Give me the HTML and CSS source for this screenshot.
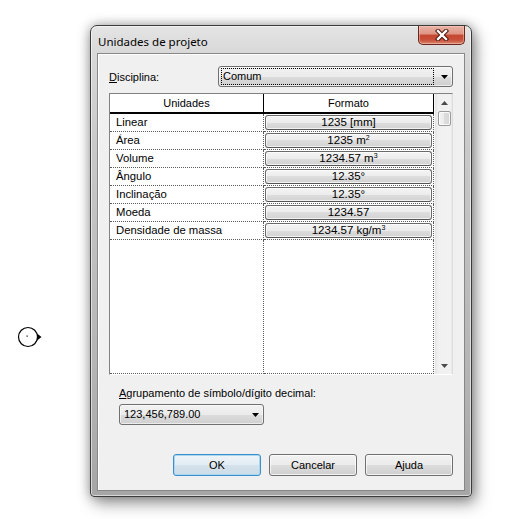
FILE: index.html
```html
<!DOCTYPE html>
<html lang="pt">
<head>
<meta charset="utf-8">
<title>Unidades de projeto</title>
<link rel="stylesheet" href="styles.css">
</head>
<body>
<svg class="cursor" width="28" height="22" viewBox="0 0 28 22">
  <circle cx="12" cy="11" r="9.5" fill="#fff" stroke="#000" stroke-width="1.2"/>
  <rect x="10.5" y="9.5" width="1.2" height="1.2" fill="#000"/>
  <path d="M21 7.5 L25.5 11 L21 14.5 Z" fill="#000"/>
</svg>
<div class="window">
  <div class="titlebar">
    <span class="title">Unidades de projeto</span>
    <button class="close" aria-label="Fechar">
      <svg width="14" height="12" viewBox="0 0 14 12">
        <path d="M3 2 L11 10 M11 2 L3 10" stroke="#4a130b" stroke-width="4.4" stroke-linecap="square"/>
        <path d="M3 2 L11 10 M11 2 L3 10" stroke="#fff" stroke-width="2.4" stroke-linecap="square"/>
      </svg>
    </button>
  </div>
  <div class="client">
    <div class="discipline">
      <span class="label"><u>D</u>isciplina:</span>
      <div class="combo combo-main">
        <span class="focus-box">Comum</span>
        <span class="combo-arrow"><svg width="7" height="4" viewBox="0 0 7 4"><path d="M0 0H7L3.5 4Z" fill="#000"/></svg></span>
      </div>
    </div>
    <div class="table">
      <div class="cells">
        <div class="hcell">Unidades</div>
        <div class="hcell">Formato</div>

        <div class="cell name">Linear</div>
        <div class="cell fmt"><span class="fbtn">1235 [mm]</span></div>
        <div class="cell name">Área</div>
        <div class="cell fmt"><span class="fbtn">1235 m<sup>2</sup></span></div>
        <div class="cell name">Volume</div>
        <div class="cell fmt"><span class="fbtn">1234.57 m<sup>3</sup></span></div>
        <div class="cell name">Ângulo</div>
        <div class="cell fmt"><span class="fbtn">12.35°</span></div>
        <div class="cell name">Inclinação</div>
        <div class="cell fmt"><span class="fbtn">12.35°</span></div>
        <div class="cell name">Moeda</div>
        <div class="cell fmt"><span class="fbtn">1234.57</span></div>
        <div class="cell name">Densidade de massa</div>
        <div class="cell fmt"><span class="fbtn">1234.57 kg/m<sup>3</sup></span></div>

        <div class="cell filler"></div>
        <div class="cell filler"></div>
      </div>
      <div class="scrollbar">
        <div class="sb-btn"><svg width="7" height="4" viewBox="0 0 7 4"><path d="M0 4H7L3.5 0Z" fill="#4a4a4a"/></svg></div>
        <div class="sb-thumb"></div>
        <div class="sb-track"></div>
        <div class="sb-btn"><svg width="7" height="4" viewBox="0 0 7 4"><path d="M0 0H7L3.5 4Z" fill="#4a4a4a"/></svg></div>
      </div>
    </div>
    <div class="group-label"><u>A</u>grupamento de símbolo/dígito decimal:</div>
    <div class="combo combo-small">
      <span class="combo-text">123,456,789.00</span>
      <svg width="7" height="4" viewBox="0 0 7 4"><path d="M0 0H7L3.5 4Z" fill="#000"/></svg>
    </div>
    <div class="buttons">
      <button class="btn btn-default">OK</button>
      <button class="btn">Cancelar</button>
      <button class="btn">A<u>j</u>uda</button>
    </div>
  </div>
</div>
</body>
</html>
```

FILE: styles.css
```css
* { box-sizing: border-box; }

html, body {
  margin: 0;
  padding: 0;
  background: #fff;
}

body {
  width: 527px;
  height: 519px;
  overflow: hidden;
  position: relative;
  padding: 25px 0 0 90px;
  font-family: "Liberation Sans", Arial, sans-serif;
  font-size: 11px;
  color: #000;
}

.cursor {
  position: absolute;
  left: 16px;
  top: 326px;
}

.window {
  width: 382px;
  height: 472px;
  border: 1px solid #3b3b3b;
  border-radius: 7px 7px 4px 4px;
  background: linear-gradient(to bottom, #e4e4e4 0px, #d9d9d9 26px, #c9c9c9 120px, #b3b3b3 360px, #a6a6a6 100%);
  padding: 0 6px 5px;
  display: flex;
  flex-direction: column;
  box-shadow: 0 0 12px rgba(0, 0, 0, 0.35), 4px 7px 16px rgba(0, 0, 0, 0.35), inset 0 0 0 1px rgba(255, 255, 255, 0.55);
}

.titlebar {
  height: 27px;
  flex: none;
  display: flex;
  justify-content: space-between;
  align-items: flex-start;
}

.title {
  font-family: "Noto Sans", "Liberation Sans", sans-serif;
  font-size: 11.5px;
  line-height: 16px;
  margin: 8px 0 0 1px;
  color: #000;
}

.close {
  width: 47px;
  height: 19px;
  padding: 0;
  border: 1px solid #6b261b;
  border-top: none;
  border-radius: 0 0 5px 5px;
  background: linear-gradient(to bottom, #e9b3a5 0%, #dd9484 45%, #c5472f 50%, #c8503a 78%, #dc8a74 100%);
  box-shadow: inset 0 0 0 1px rgba(255, 210, 200, 0.45);
  display: flex;
  align-items: center;
  justify-content: center;
}

.close svg { display: block; }

.client {
  flex: 1;
  border: 1px solid #878787;
  background: #f0f0f0;
  box-shadow: inset 1px 1px 0 #fff;
  padding: 12px 11px 0;
  display: flex;
  flex-direction: column;
}

.discipline {
  height: 21px;
  display: flex;
  align-items: center;
}

.label {
  flex: 1;
  line-height: 14px;
}

.combo {
  height: 21px;
  border: 1px solid #707070;
  border-radius: 3px;
  background: linear-gradient(to bottom, #f2f2f2 0%, #ebebeb 50%, #dddddd 50%, #cfcfcf 100%);
  box-shadow: inset 0 0 0 1px rgba(255, 255, 255, 0.6);
  display: flex;
  align-items: center;
}

.combo-main {
  width: 235px;
  padding: 1px 0 1px 2px;
}

.focus-box {
  flex: 1;
  height: 17px;
  border: 1px dotted #000;
  padding-left: 1px;
  line-height: 15px;
}

.combo-arrow {
  width: 18px;
  display: flex;
  justify-content: center;
  padding-left: 2px;
}

.combo-arrow svg, .combo-small svg { display: block; }

.table {
  margin-top: 6px;
  height: 282px;
  border: 1px solid;
  border-color: #828282 #dcdcdc #ffffff #828282;
  background: #fff;
  display: flex;
}

.cells {
  width: 324px;
  display: grid;
  grid-template-columns: 154px 170px;
  grid-template-rows: 20px repeat(7, 18px) 1fr;
}

.hcell {
  background: #fff;
  border-right: 1px solid #000;
  border-bottom: 2px solid #000;
  display: flex;
  align-items: center;
  justify-content: center;
  line-height: 14px;
  padding-bottom: 1px;
}

.cell {
  border-right: 1px dotted #5a5a5a;
  border-bottom: 1px dotted #5a5a5a;
}

.name {
  padding-left: 6px;
  line-height: 17px;
  font-size: 11.3px;
}

.fmt {
  padding: 1px;
  display: flex;
}

.fbtn {
  flex: 1;
  height: 15px;
  border: 1px solid #6a6a6a;
  border-bottom-color: #555;
  border-radius: 3px;
  background: linear-gradient(to bottom, #f4f4f4 0%, #ececec 50%, #dedede 50%, #d2d2d2 100%);
  box-shadow: inset 0 0 0 1px rgba(255, 255, 255, 0.7);
  text-align: center;
  line-height: 13px;
  font-size: 11.5px;
  white-space: nowrap;
}

sup {
  font-size: 7px;
  line-height: 0;
  vertical-align: 4px;
}

.scrollbar {
  width: 18px;
  display: flex;
  flex-direction: column;
  background: linear-gradient(to right, #e4e4e4 0, #f0f0f0 3px, #f2f2f2 15px, #e8e8e8 100%);
  border-left: 1px solid #f7f7f7;
}

.sb-btn {
  height: 17px;
  flex: none;
  display: flex;
  align-items: center;
  justify-content: center;
  padding-left: 1px;
}

.sb-btn svg { display: block; }

.sb-thumb {
  height: 15px;
  width: 13px;
  margin-left: 3px;
  flex: none;
  border: 1px solid #9a9a9a;
  border-radius: 2px;
  background: linear-gradient(to right, #f4f4f4 0%, #eaeaea 50%, #dcdcdc 50%, #d6d6d6 100%);
  box-shadow: inset 0 0 0 1px rgba(255, 255, 255, 0.8);
}

.sb-track { flex: 1; }

.group-label {
  margin: 11px 0 0 10px;
  line-height: 14px;
}

.combo-small {
  width: 145px;
  margin: 4px 0 0 10px;
  padding: 0 4px 0 4px;
  justify-content: space-between;
}

.combo-text {
  line-height: 15px;
}

.buttons {
  margin-top: 29px;
  display: flex;
  justify-content: flex-end;
  gap: 8px;
}

.btn {
  width: 88px;
  height: 22px;
  padding: 0;
  font-family: "Liberation Sans", Arial, sans-serif;
  font-size: 11px;
  color: #000;
  border: 1px solid #707070;
  border-radius: 3px;
  background: linear-gradient(to bottom, #f2f2f2 0%, #ebebeb 50%, #dddddd 50%, #cfcfcf 100%);
  box-shadow: inset 0 0 0 1px rgba(255, 255, 255, 0.7);
}

.btn-default {
  border-color: #3c8ec8;
  background: linear-gradient(to bottom, #eef4f9 0%, #e3ecf3 50%, #d5e2ec 50%, #cddce8 100%);
  box-shadow: inset 0 0 0 1px #a9d8f4;
}
```
